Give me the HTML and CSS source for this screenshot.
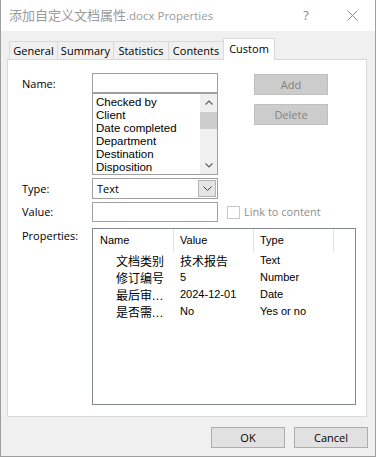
FILE: index.html
```html
<!DOCTYPE html>
<html>
<head>
<meta charset="utf-8">
<link rel="stylesheet" href="styles.css">
</head>
<body>
<div class="window">
  <div class="titlebar">
    <div class="title"><span class="cjk-title">添加自定义文档属性</span>.docx Properties</div>
    <div class="tb-btn help">?</div>
    <div class="tb-btn close">
      <svg width="11" height="11" viewBox="0 0 11 11"><path d="M0.5 0.5 L10.5 10.5 M10.5 0.5 L0.5 10.5" stroke="#8a8a8a" stroke-width="1" fill="none"/></svg>
    </div>
  </div>
  <div class="body">
    <div class="tabs">
      <div class="tab t-general">General</div>
      <div class="tab t-summary">Summary</div>
      <div class="tab t-stats">Statistics</div>
      <div class="tab t-contents">Contents</div>
      <div class="tab active t-custom">Custom</div>
    </div>
    <div class="panel">
      <div class="row row-name">
        <div class="label lbl-name">Name:</div>
        <div class="ctrl-col">
          <div class="input"></div>
          <div class="listbox">
            <div class="lb-items">
              <div class="lb-item">Checked by</div>
              <div class="lb-item">Client</div>
              <div class="lb-item">Date completed</div>
              <div class="lb-item">Department</div>
              <div class="lb-item">Destination</div>
              <div class="lb-item">Disposition</div>
            </div>
            <div class="scrollbar">
              <div class="sb-arrow">
                <svg width="8" height="5" viewBox="0 0 8 5"><path d="M0.5 4.5 L4 1 L7.5 4.5" stroke="#606060" stroke-width="1.2" fill="none"/></svg>
              </div>
              <div class="sb-track"><div class="sb-thumb"></div></div>
              <div class="sb-arrow">
                <svg width="8" height="5" viewBox="0 0 8 5"><path d="M0.5 0.5 L4 4 L7.5 0.5" stroke="#606060" stroke-width="1.2" fill="none"/></svg>
              </div>
            </div>
          </div>
        </div>
        <div class="side-btns">
          <div class="btn disabled">Add</div>
          <div class="btn disabled btn-delete">Delete</div>
        </div>
      </div>
      <div class="row row-type">
        <div class="label lbl-type">Type:</div>
        <div class="select">
          <div class="select-text">Text</div>
          <div class="select-btn">
            <svg width="9" height="5" viewBox="0 0 9 5"><path d="M0.5 0.5 L4.5 4.5 L8.5 0.5" stroke="#404040" stroke-width="1" fill="none"/></svg>
          </div>
        </div>
      </div>
      <div class="row row-value">
        <div class="label lbl-value">Value:</div>
        <div class="input"></div>
        <div class="checkbox"></div>
        <div class="cb-label">Link to content</div>
      </div>
      <div class="row row-props">
        <div class="label lbl-props">Properties:</div>
        <div class="listview">
          <div class="lv-header">
            <div class="lv-col c-name">Name</div>
            <div class="lv-col c-value">Value</div>
            <div class="lv-col c-type">Type</div>
          </div>
          <div class="lv-row">
            <div class="lv-cell c-name cjk">文档类别</div>
            <div class="lv-cell c-value cjk">技术报告</div>
            <div class="lv-cell c-type">Text</div>
          </div>
          <div class="lv-row">
            <div class="lv-cell c-name cjk">修订编号</div>
            <div class="lv-cell c-value">5</div>
            <div class="lv-cell c-type">Number</div>
          </div>
          <div class="lv-row">
            <div class="lv-cell c-name cjk">最后审<span class="ell">...</span></div>
            <div class="lv-cell c-value">2024-12-01</div>
            <div class="lv-cell c-type">Date</div>
          </div>
          <div class="lv-row">
            <div class="lv-cell c-name cjk">是否需<span class="ell">...</span></div>
            <div class="lv-cell c-value">No</div>
            <div class="lv-cell c-type">Yes or no</div>
          </div>
        </div>
      </div>
    </div>
    <div class="footer">
      <div class="btn btn-ok">OK</div>
      <div class="btn btn-cancel">Cancel</div>
    </div>
  </div>
</div>
</body>
</html>
```

FILE: styles.css
```css
* { box-sizing: border-box; }
html, body { margin: 0; padding: 0; background: #ffffff; }
body {
  font-family: "Open Sans", "Noto Sans CJK SC", sans-serif;
  font-size: 11px;
  color: #000;
}
.window {
  width: 376px;
  height: 457px;
  border: 1px solid #9e9e9e;
  border-top: none;
  background: #f0f0f0;
  display: flex;
  flex-direction: column;
}
.titlebar {
  height: 31px;
  background: #ffffff;
  display: flex;
  align-items: center;
  padding-left: 8px;
  flex-shrink: 0;
}
.title {
  flex: 1;
  color: #9a9a9a;
  font-size: 11.5px;
  white-space: nowrap;
  line-height: 16px;
  padding-bottom: 1px;
}
.cjk-title {
  font-family: "Noto Sans CJK SC", sans-serif;
  font-size: 13px;
}
.tb-btn {
  width: 46px;
  height: 31px;
  display: flex;
  align-items: center;
  justify-content: center;
}
.help {
  color: #8a8a8a;
  font-size: 13px;
  padding-bottom: 2px;
}
.body {
  flex: 1;
  padding: 7px 8px 0 6px;
  display: flex;
  flex-direction: column;
}
.tabs {
  display: flex;
  align-items: flex-end;
  height: 21px;
  padding-left: 2px;
}
.tab {
  height: 18px;
  border: 1px solid #d9d9d9;
  border-bottom: none;
  margin-left: -1px;
  background: #f0f0f0;
  text-align: center;
  line-height: 17px;
  white-space: nowrap;
}
.tab.t-general { margin-left: 0; width: 49px; }
.t-summary { width: 57px; }
.t-stats { width: 56px; }
.t-contents { width: 56px; }
.tab.active {
  width: 52px;
  height: 22px;
  margin-bottom: -1px;
  background: #ffffff;
  position: relative;
  z-index: 1;
  padding-top: 1px;
}
.panel {
  width: 360px;
  height: 358px;
  border: 1px solid #d9d9d9;
  background: #ffffff;
  padding: 13px 0 0 14px;
}
.row { display: flex; align-items: flex-start; }
.label {
  width: 70px;
  line-height: 16px;
  flex-shrink: 0;
}
.lbl-name { padding-top: 3px; }
.lbl-type { padding-top: 3px; }
.lbl-value { padding-top: 2px; }
.lbl-props { padding-top: 0; }
.ctrl-col { width: 126px; display: flex; flex-direction: column; }
.input {
  width: 126px;
  height: 20px;
  border: 1px solid #a0a0a0;
  background: #fff;
}
.listbox {
  height: 82px;
  border: 1px solid #a0a0a0;
  display: flex;
  overflow: hidden;
}
.lb-items {
  flex: 1;
  padding: 2px 0 0 3px;
  overflow: hidden;
}
.lb-item {
  line-height: 13px;
  height: 13px;
  white-space: nowrap;
  font-family: "Liberation Sans", sans-serif;
  font-size: 11.5px;
}
.scrollbar {
  width: 17px;
  background: #f0f0f0;
  display: flex;
  flex-direction: column;
}
.sb-arrow {
  height: 17px;
  display: flex;
  align-items: center;
  justify-content: center;
}
.sb-track { flex: 1; padding-top: 1px; }
.sb-thumb { height: 17px; background: #cdcdcd; }
.side-btns {
  margin-left: 36px;
  padding-top: 1px;
  display: flex;
  flex-direction: column;
  gap: 9px;
}
.btn {
  width: 74px;
  height: 21px;
  border: 1px solid #adadad;
  background: #e1e1e1;
  text-align: center;
  line-height: 19px;
}
.btn.disabled {
  background: #cccccc;
  border-color: #bfbfbf;
  color: #838383;
}
.row-type { margin-top: 3px; }
.select {
  width: 126px;
  height: 21px;
  border: 1px solid #a0a0a0;
  background: #fff;
  display: flex;
  align-items: stretch;
  padding: 1px;
}
.select-text { flex: 1; padding-left: 3px; line-height: 17px; }
.select-btn {
  width: 18px;
  border: 1px solid #b4b4b4;
  background: #e5e5e5;
  display: flex;
  align-items: center;
  justify-content: center;
}
.row-value { margin-top: 3px; }
.checkbox {
  width: 13px;
  height: 13px;
  border: 1px solid #c8c8c8;
  margin: 4px 0 0 9px;
  background: #fff;
}
.cb-label {
  color: #8d8d8d;
  margin-left: 4px;
  line-height: 16px;
  padding-top: 2px;
}
.row-props { margin-top: 6px; }
.listview {
  width: 264px;
  height: 177px;
  border: 1px solid #828790;
  background: #fff;
  font-family: "Liberation Sans", "Noto Sans CJK SC", sans-serif;
  font-size: 11px;
}
.lv-header {
  display: flex;
  height: 23px;
}
.lv-col {
  border-right: 1px solid #e5e5e5;
  line-height: 22px;
  padding-left: 6px;
}
.lv-header .c-name { width: 81px; padding-left: 7px; }
.lv-header .c-value { width: 80px; }
.lv-header .c-type { width: 80px; }
.lv-row { display: flex; height: 17px; line-height: 17px; }
.lv-cell { white-space: nowrap; overflow: hidden; }
.lv-row .c-name { width: 81px; padding-left: 23px; }
.lv-row .c-value { width: 80px; padding-left: 6px; }
.lv-row .c-type { width: 80px; padding-left: 6px; }
.cjk { font-size: 12px; font-family: "Noto Sans CJK SC", sans-serif; line-height: 17px; }
.ell { font-family: "Liberation Sans", sans-serif; font-size: 12px; letter-spacing: 0.5px; }
.footer {
  display: flex;
  justify-content: flex-end;
  gap: 9px;
  margin-top: 10px;
  margin-right: -1px;
}
```
